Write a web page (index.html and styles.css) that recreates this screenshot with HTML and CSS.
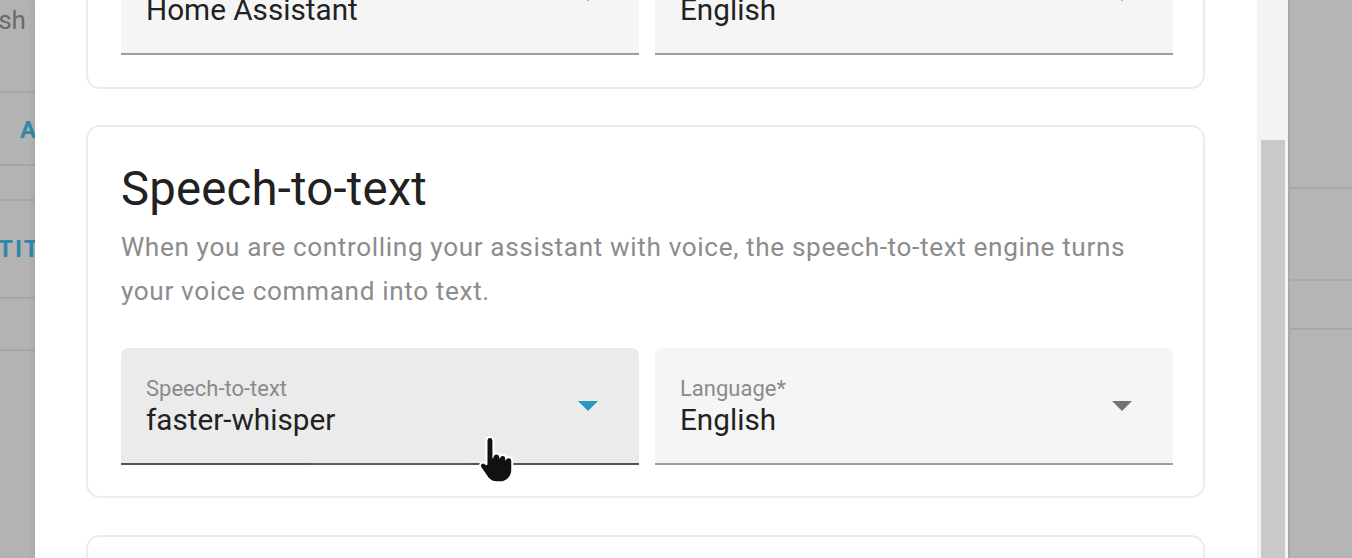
FILE: index.html
```html
<!DOCTYPE html>
<html lang="en">
<head>
<meta charset="utf-8">
<title>Speech-to-text</title>
<link rel="stylesheet" href="styles.css">
</head>
<body>
<div class="screen">
  <aside class="bg-left">
    <div class="bg-row row-a"><span class="bg-text">Refresh</span></div>
    <div class="bg-row row-b"><span class="bg-link link-a">ADD</span></div>
    <div class="bg-row row-c"></div>
    <div class="bg-row row-d"><span class="bg-link link-b">ENTITIES</span></div>
    <div class="bg-row row-e"></div>
    <div class="bg-row row-f"></div>
  </aside>

  <div class="dialog">
    <div class="dialog-body">
      <section class="card card-first">
        <div class="fields">
          <div class="field">
            <div class="field-text">
              <span class="field-label">Conversation agent</span>
              <span class="field-value">Home Assistant</span>
            </div>
            <span class="arrow"></span>
          </div>
          <div class="field">
            <div class="field-text">
              <span class="field-label">Language*</span>
              <span class="field-value">English</span>
            </div>
            <span class="arrow"></span>
          </div>
        </div>
      </section>

      <section class="card">
        <h2 class="card-title">Speech-to-text</h2>
        <p class="card-desc">When you are controlling your assistant with voice, the speech-to-text engine turns your voice command into text.</p>
        <div class="fields">
          <div class="field field-hover">
            <div class="field-text">
              <span class="field-label">Speech-to-text</span>
              <span class="field-value">faster-whisper</span>
            </div>
            <span class="arrow arrow-accent"></span>
            <span class="ripple-line"></span>
            <svg class="cursor" width="40" height="52" viewBox="0 0 17 22" aria-hidden="true">
              <path d="M5.5 1.2c.9 0 1.5.7 1.5 1.5v6.2c.3-.5.9-.8 1.5-.7.7.1 1.2.6 1.3 1.2.3-.4.9-.6 1.4-.5.7.1 1.2.7 1.2 1.3.3-.3.8-.5 1.3-.4.8.1 1.3.8 1.3 1.6v3.8c0 2.9-2.3 5.3-5.2 5.3H8.3c-1.6 0-3-.8-3.9-2L1.5 14.3c-.5-.7-.3-1.6.4-2 .6-.4 1.4-.3 1.9.3L4 13V2.7c0-.8.6-1.5 1.5-1.5z" fill="#111" stroke="#fff" stroke-width="0.9"/>
            </svg>
          </div>
          <div class="field">
            <div class="field-text">
              <span class="field-label">Language*</span>
              <span class="field-value">English</span>
            </div>
            <span class="arrow"></span>
          </div>
        </div>
      </section>

      <section class="card card-last"></section>
    </div>
    <div class="scrollbar"><div class="thumb"></div></div>
  </div>

  <aside class="bg-right">
    <div class="rrow rrow-a"></div>
    <div class="rrow rrow-b"></div>
    <div class="rrow rrow-c"></div>
    <div class="rrow rrow-d"></div>
  </aside>
</div>
</body>
</html>
```
FILE: styles.css
```css
* { box-sizing: border-box; }
html, body { margin: 0; padding: 0; }
body {
  width: 1352px;
  height: 558px;
  overflow: hidden;
  font-family: Roboto, "Noto Sans", sans-serif;
  background: #b4b4b4;
}
.screen {
  display: flex;
  width: 1352px;
  height: 558px;
  overflow: hidden;
}

/* background page, left */
.bg-left {
  width: 35px;
  flex: none;
  background: #b3b3b3;
  display: flex;
  flex-direction: column;
  overflow: hidden;
}
.bg-row {
  flex: none;
  border-bottom: 2px solid #a6a6a6;
  display: flex;
  align-items: center;
  white-space: nowrap;
  overflow: hidden;
}
.row-a { height: 93px; align-items: flex-start; }
.row-b { height: 73px; }
.row-c { height: 35px; }
.row-d { height: 98px; }
.row-e { height: 52px; }
.row-f { flex: 1; border-bottom: none; }
.bg-text {
  font-size: 26px;
  line-height: 30px;
  color: #6a6a6a;
  margin-left: -63px;
  margin-top: 5px;
}
.bg-link {
  font-size: 24px;
  font-weight: 700;
  letter-spacing: 2px;
  color: #2f88ab;
}
.link-a { margin-left: 20px; margin-top: 2px; }
.link-b { margin-left: -36px; }

/* dialog */
.dialog {
  width: 1253px;
  flex: none;
  background: #fff;
  display: flex;
  box-shadow: -2px 0 6px rgba(0,0,0,0.08);
}
.dialog-body {
  flex: 1;
  padding-left: 51px;
  padding-right: 52px;
  display: flex;
  flex-direction: column;
  gap: 36px;
  overflow: hidden;
}
.card {
  flex: none;
  border: 2px solid #ececec;
  border-radius: 14px;
  padding: 34px 30px 31px 33px;
  background: #fff;
}
.card-first {
  margin-top: -104px;
  padding-top: 40px;
  padding-bottom: 32px;
}
.card-last { height: 120px; margin-top: 1px; }

.card-title {
  margin: 0;
  font-size: 47.3px;
  font-weight: 400;
  line-height: 56px;
  color: #212121;
  letter-spacing: 0.2px;
}
.card-desc {
  margin: 8px 0 35px 0;
  font-size: 26.2px;
  line-height: 44px;
  color: #8c8c8c;
  letter-spacing: 0.62px;
}

.fields {
  display: flex;
  gap: 16px;
}
.field {
  flex: 1;
  height: 117px;
  position: relative;
  background: #f5f5f5;
  border-radius: 7px 7px 0 0;
  border-bottom: 2px solid #9e9e9e;
  display: flex;
  align-items: center;
  padding: 0 41px 0 25px;
}
.field-hover {
  background: #ebebeb;
  border-bottom-color: #555;
}
.field-text {
  flex: 1;
  display: flex;
  flex-direction: column;
  padding-top: 5px;
}
.field-label {
  font-size: 22px;
  line-height: 24px;
  color: #8a8a8a;
}
.field-value {
  font-size: 29.7px;
  line-height: 38px;
  color: #222;
}
.arrow {
  flex: none;
  width: 0;
  height: 0;
  border-left: 10px solid transparent;
  border-right: 10px solid transparent;
  border-top: 10px solid #737373;
}
.arrow-accent { border-top-color: #2b96c0; }
.ripple-line {
  position: absolute;
  left: 190px;
  bottom: -2px;
  width: 160px;
  height: 2px;
  background: rgba(60, 140, 130, 0.35);
}
.cursor {
  position: absolute;
  left: 356px;
  top: 86px;
}

/* scrollbar */
.scrollbar {
  width: 31px;
  flex: none;
  background: #f3f3f3;
  padding: 140px 3px 0 4px;
}
.thumb {
  height: 100%;
  background: #c9c9c9;
}

/* background page, right */
.bg-right {
  flex: 1;
  background: #b5b5b5;
  border-left: 2px solid #a9a9a9;
  display: flex;
  flex-direction: column;
}
.rrow { flex: none; border-bottom: 2px solid #a8a8a8; }
.rrow-a { height: 189px; }
.rrow-b { height: 92px; }
.rrow-c { height: 49px; }
.rrow-d { flex: 1; border-bottom: none; }
```
